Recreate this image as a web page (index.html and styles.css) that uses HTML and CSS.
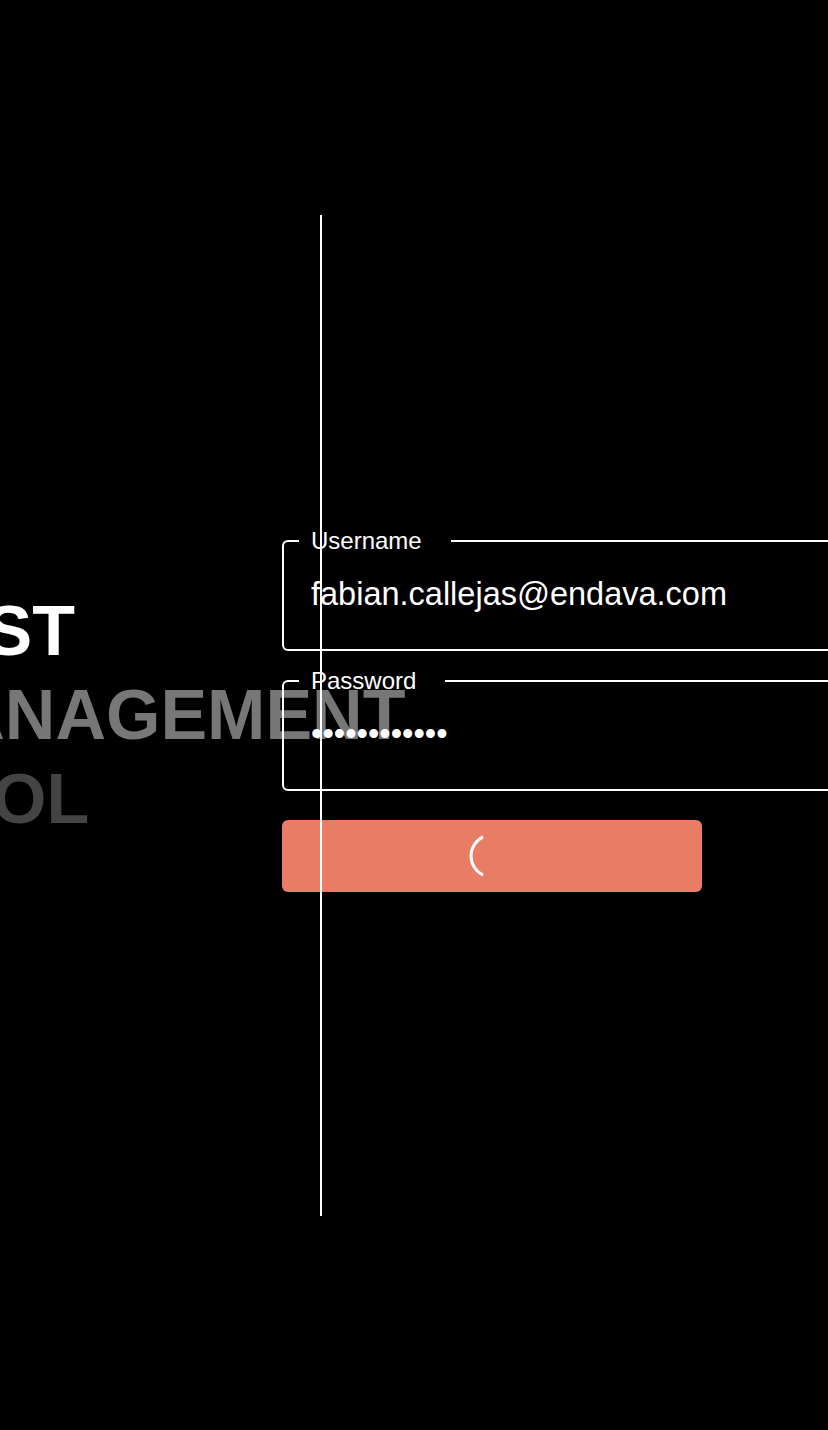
FILE: index.html
```html
<!DOCTYPE html>
<html lang="en">
<head>
<meta charset="utf-8">
<title>Test Management Tool - Login</title>
<link rel="stylesheet" href="styles.css">
</head>
<body>
<main class="page">
  <h1 class="hero">
    <span class="hero-line hero-line-1">TEST</span>
    <span class="hero-line hero-line-2">MANAGEMENT</span>
    <span class="hero-line hero-line-3">TOOL</span>
  </h1>
  <form class="login">
    <fieldset class="field">
      <legend class="field-label">Username</legend>
      <input class="field-input" type="text" value="fabian.callejas@endava.com">
    </fieldset>
    <fieldset class="field">
      <legend class="field-label">Password</legend>
      <input class="field-input field-input-password" type="password" value="............">
    </fieldset>
    <button class="submit" type="button" aria-label="Loading">
      <svg class="spinner" width="48" height="48" viewBox="0 0 48 48">
        <path d="M15.13 4.97 A21 21 0 0 0 15.13 43.03" fill="none" stroke="#fff" stroke-width="3"/>
      </svg>
    </button>
  </form>
  <div class="divider"></div>
</main>
</body>
</html>
```
FILE: styles.css
```css
html, body {
  margin: 0;
  padding: 0;
  background: #000;
  overflow: hidden;
}

body {
  font-family: "Liberation Sans", Arial, sans-serif;
  color: #fff;
}

.page {
  position: relative;
  height: 100vh;
  display: flex;
  align-items: center;
}

.hero {
  flex: 0 0 386px;
  min-width: 0;
  margin: 0 0 0 -104px;
  font-size: 70px;
  line-height: 84px;
  font-weight: 700;
  white-space: nowrap;
  display: flex;
  flex-direction: column;
}

.hero-line-1 { color: #ffffff; }
.hero-line-2 { color: #777777; }
.hero-line-3 { color: #444444; }

.login {
  flex: 0 0 600px;
  min-width: 0;
  display: flex;
  flex-direction: column;
  position: relative;
  margin-top: -11px;
}

.field {
  margin: 0 0 16px 0;
  padding: 0 15px;
  border: 2px solid #fff;
  border-radius: 6px;
  min-width: 0;
}

.field-label {
  padding: 0 29px 0 12px;
  font-size: 24px;
  color: #fff;
}

.field-input {
  display: block;
  width: 100%;
  box-sizing: border-box;
  background: transparent;
  border: 0;
  outline: none;
  color: #fff;
  font-family: "Liberation Sans", Arial, sans-serif;
  font-size: 32.5px;
  padding: 21px 12px 36px;
  margin: 0;
}

.field + .field {
  margin-bottom: 29px;
}

.submit {
  width: 420px;
  height: 72px;
  border: 0;
  border-radius: 6px;
  background: #e87c64;
  display: flex;
  align-items: center;
  justify-content: center;
  padding: 0;
}

.spinner {
  display: block;
}

.divider {
  position: absolute;
  left: 320px;
  top: 15vh;
  height: 70vh;
  width: 2px;
  background: #fff;
}
```
